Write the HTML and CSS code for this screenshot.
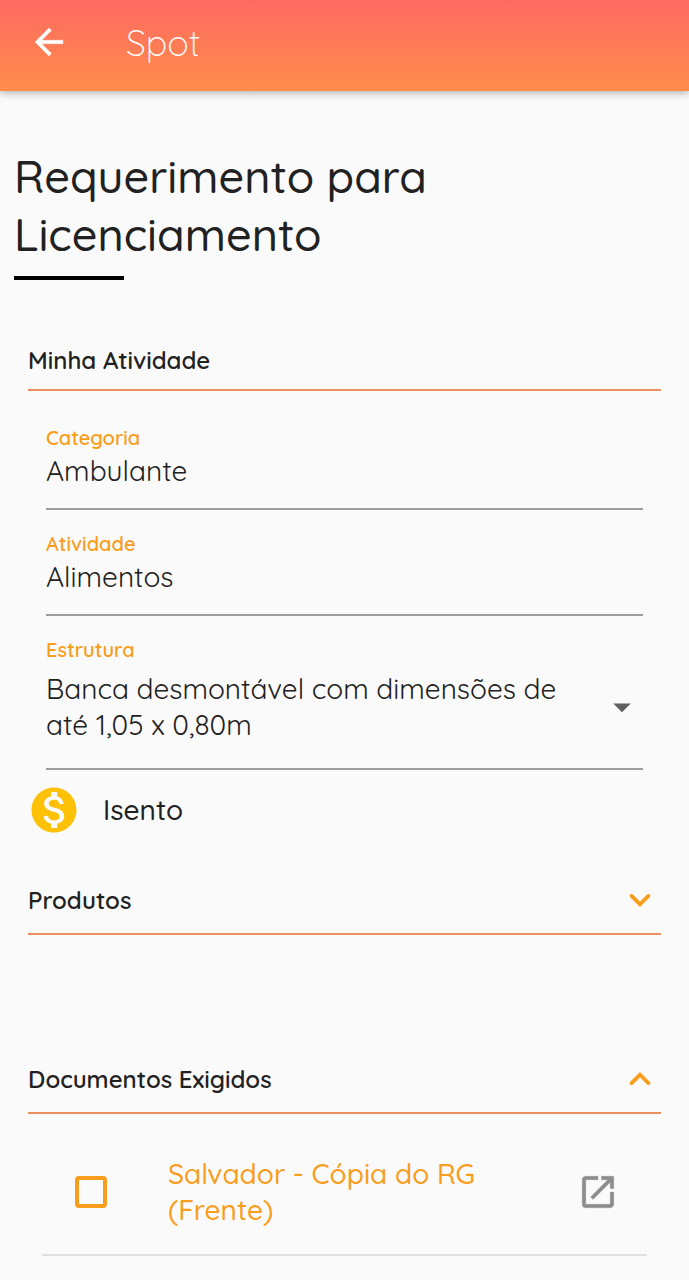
FILE: index.html
```html
<!DOCTYPE html>
<html lang="pt-BR">
<head>
    <meta charset="UTF-8">
    <meta name="viewport" content="width=device-width, initial-scale=1.0">
    <title>Spot</title>
    <link rel="stylesheet" href="styles.css">
</head>
<body>
    <header class="topbar">
        <button type="button" class="icon-btn" aria-label="Voltar">
            <svg class="icon" viewBox="0 0 24 24"><path fill="#fff" stroke="#fff" stroke-width=".2" d="M20 11H7.83l5.59-5.59L12 4l-8 8 8 8 1.41-1.41L7.83 13H20v-2z"/></svg>
        </button>
        <span class="topbar-title">Spot</span>
    </header>

    <main>
        <h1 class="title">Requerimento para Licenciamento</h1>

        <section class="section">
            <h2 class="section-title">Minha Atividade</h2>
            <div class="fields">
                <div class="field">
                    <label for="categoria">Categoria</label>
                    <input type="text" id="categoria" name="categoria" value="Ambulante">
                </div>
                <div class="field">
                    <label for="atividade">Atividade</label>
                    <input type="text" id="atividade" name="atividade" value="Alimentos">
                </div>
                <div class="field field-select">
                    <label for="estrutura">Estrutura</label>
                    <div class="select-row">
                        <select id="estrutura" name="estrutura">
                            <option>Banca desmontável com dimensões de até 1,05 x 0,80m</option>
                        </select>
                        <svg class="icon" viewBox="0 0 24 24"><path fill="#616161" d="M7 10l5 5 5-5z"/></svg>
                    </div>
                </div>
            </div>
            <div class="price">
                <svg class="coin" viewBox="0 0 24 24"><path fill="#ffc107" d="M12 2C6.48 2 2 6.48 2 12s4.48 10 10 10 10-4.48 10-10S17.52 2 12 2zm1.41 16.09V20h-2.67v-1.93c-1.71-.36-3.16-1.46-3.27-3.4h1.96c.1 1.05.82 1.87 2.65 1.87 1.96 0 2.4-.98 2.4-1.59 0-.83-.44-1.61-2.67-2.14-2.48-.6-4.18-1.62-4.18-3.67 0-1.72 1.39-2.84 3.11-3.21V4h2.67v1.95c1.86.45 2.79 1.86 2.85 3.39H14.3c-.05-1.11-.64-1.87-2.22-1.87-1.5 0-2.4.68-2.4 1.64 0 .84.65 1.39 2.67 1.91s4.18 1.39 4.18 3.91c-.01 1.83-1.38 2.83-3.12 3.16z"/></svg>
                <span>Isento</span>
            </div>
        </section>

        <section class="section">
            <h2>
                <button type="button" class="accordion" aria-expanded="false">
                    Produtos
                    <svg class="icon" viewBox="0 0 24 24"><path class="chevron" d="M7.2 9.7l4.8 4.8 4.8-4.8"/></svg>
                </button>
            </h2>
        </section>

        <section class="section section-docs">
            <h2>
                <button type="button" class="accordion" aria-expanded="true">
                    Documentos Exigidos
                    <svg class="icon" viewBox="0 0 24 24"><path class="chevron" d="M7.2 14.3l4.8-4.8 4.8 4.8"/></svg>
                </button>
            </h2>
            <ul class="docs">
                <li class="doc">
                    <input type="checkbox" id="doc_rg" name="doc_rg">
                    <label for="doc_rg">Salvador - Cópia do RG (Frente)</label>
                    <a href="#" aria-label="Abrir documento">
                        <svg class="icon" viewBox="0 0 24 24"><path fill="#8c8c8c" stroke="#8c8c8c" stroke-width=".2" d="M19 19H5V5h7V3H5a2 2 0 0 0-2 2v14a2 2 0 0 0 2 2h14c1.1 0 2-.9 2-2v-7h-2v7zM14 3v2h3.59l-9.83 9.83 1.41 1.41L19 6.41V10h2V3h-7z"/></svg>
                    </a>
                </li>
            </ul>
        </section>
    </main>
</body>
</html>
```

FILE: styles.css
```css
* {
    box-sizing: border-box;
}

body {
    margin: 0;
    background-color: #fafafa;
    color: #212121;
    font-family: Quicksand, Lato, sans-serif;
    font-size: 28px;
    line-height: 36px;
}

h1,
h2,
ul {
    margin: 0;
    padding: 0;
}

h2 {
    font-size: 24px;
    font-weight: 600;
}

button,
input,
select {
    margin: 0;
    padding: 0;
    border: none;
    background: none;
    color: inherit;
    font: inherit;
}

.icon {
    display: block;
    flex: none;
    width: 42px;
    height: 42px;
}

.topbar {
    display: flex;
    align-items: center;
    gap: 56px;
    padding: 21px 28px 28px;
    background: linear-gradient(#ff6b62, #ff8c4a);
    box-shadow: 0 2px 8px rgba(0, 0, 0, 0.3);
}

.topbar-title {
    padding-top: 2px;
    color: #fff;
    font-size: 36px;
    font-weight: 300;
    line-height: 40px;
}

.title {
    padding: 56px 14px 0;
    font-size: 45px;
    font-weight: 500;
    line-height: 58px;
}

.title::after {
    content: "";
    display: block;
    width: 110px;
    height: 4px;
    margin-top: 13px;
    background-color: #000;
}

.section {
    padding: 0 28px;
}

.section-title {
    margin-top: 62px;
    padding-bottom: 11px;
    border-bottom: 2px solid #e98e5c;
}

.fields {
    display: flex;
    flex-direction: column;
    gap: 21px;
    padding: 34px 18px 0;
}

.field {
    display: flex;
    flex-direction: column;
    gap: 2px;
    padding-bottom: 19px;
    border-bottom: 2px solid #9c9c9c;
}

.field label {
    color: #f99d1c;
    font-size: 20px;
    font-weight: 600;
    line-height: 26px;
}

.field input,
.field select {
    height: 36px;
    font-weight: 400;
}

.field-select {
    gap: 8px;
    padding-bottom: 25px;
}

.select-row {
    display: flex;
    align-items: center;
    gap: 24px;
}

.field select {
    flex: 1;
    min-width: 0;
    height: 72px;
    appearance: none;
    white-space: pre-wrap;
}

.price {
    display: flex;
    align-items: center;
    gap: 22px;
    margin-top: 13px;
    font-weight: 500;
}

.coin {
    width: 54px;
    height: 54px;
    margin-left: -1px;
}

.accordion {
    display: flex;
    justify-content: space-between;
    align-items: center;
    width: 100%;
    margin-top: 42px;
    padding-bottom: 12px;
    border-bottom: 2px solid #e98e5c;
    text-align: left;
}

.chevron {
    fill: none;
    stroke: #f99d1c;
    stroke-width: 2.2;
    stroke-linecap: round;
}

.section-docs {
    margin-top: 123px;
}

.docs {
    padding: 28px 14px 0;
    list-style: none;
}

.doc {
    display: flex;
    align-items: center;
    padding: 14px 28px 26px 33px;
    border-bottom: 2px solid #e0e0e0;
}

.doc input {
    flex: none;
    width: 32px;
    height: 32px;
    border: 4px solid #f99d1c;
    border-radius: 4px;
    appearance: none;
}

.doc label {
    flex: 1;
    padding: 0 84px 0 61px;
    color: #f99d1c;
    font-weight: 500;
}
```
